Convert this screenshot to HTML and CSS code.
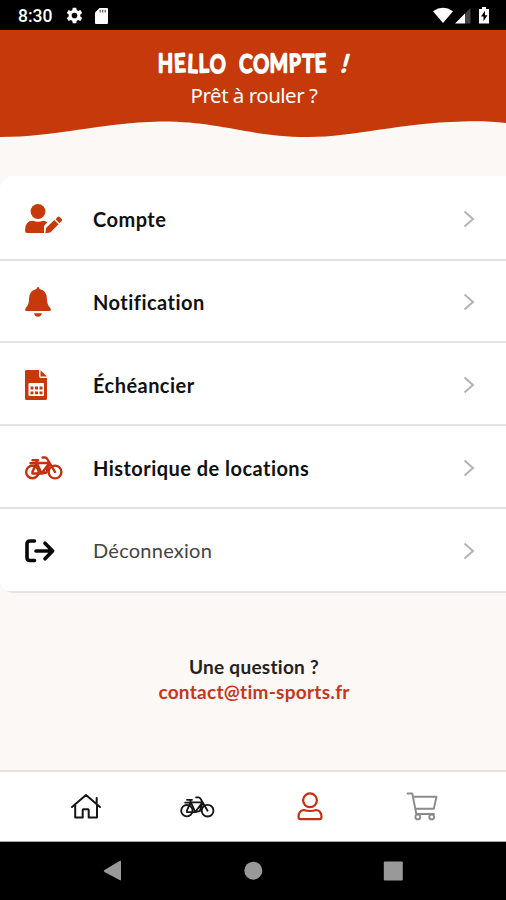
FILE: index.html
```html
<!DOCTYPE html>
<html lang="fr">
<head>
<meta charset="utf-8">
<title>Compte</title>
<link rel="stylesheet" href="styles.css">
</head>
<body>
<svg class="defs" width="0" height="0">
  <symbol id="bike" viewBox="0 0 38 24">
    <g fill="none" stroke="currentColor" stroke-linecap="round" stroke-linejoin="round">
      <circle cx="7.4" cy="16" r="6.200"/><circle cx="30" cy="16" r="6.4"/>
      <path d="M7.4 16 11.500 7H24.500L16.500 17.500H7.4M7.500 4.200H13M11 4.300l.8 3 4.700 10M30 16 22.300 3Q21.500 1.500 20 1.500H17.500M24.500 7.200 21.500 16.500 16.500 17.500M11.500 7.200H5.500"/>
    </g>
  </symbol>
  <symbol id="chevron" viewBox="0 0 12 18"><path d="m1.500 1.500 8.500 7.500-8.500 7.500" fill="none" stroke="currentColor" stroke-width="2"/></symbol>
</svg>
<div class="screen">
  <div class="status">
    <span class="time">8:30</span>
    <svg class="gear" viewBox="0 0 24 24"><path fill="currentColor" fill-rule="evenodd" d="M9.500 1h5l.6 3.400 1.900 1.100 3.300-1.200 2.500 4.300-2.700 2.200v2.400l2.700 2.200-2.500 4.300-3.300-1.200-1.900 1.100-.6 3.400h-5l-.6-3.400L7 18.500l-3.300 1.200-2.500-4.300 2.700-2.200v-2.400L1.200 8.600l2.500-4.300L7 5.500l1.900-1.100zM12 8a4 4 0 1 0 0 8 4 4 0 0 0 0-8z"/></svg>
    <svg class="card" viewBox="0 0 13 16"><path fill="currentColor" d="M4.500 0H12q1 0 1 1v14q0 1-1 1H1q-1 0-1-1V4.500z"/><path stroke="#555" stroke-width="1.200" d="M5.200 1.800v2.700M7.700 1.800v2.700M10.200 1.800v2.700"/></svg>
    <svg class="signals" viewBox="0 0 58 18">
      <path fill="#fff" d="M0 4.200Q10 -2.500 20 4.200L10 16z"/>
      <path fill="#444" d="M37.500 1v15.500H32V6.500z"/><path fill="#fff" d="M32 6.500v10H22z"/>
      <path fill="#fff" d="M46 2h3V0h4v2h3v14.500H46z"/><path fill="#000" d="m52 3.800-4 5.700h2.500v4.800l4-6H52z"/>
    </svg>
  </div>
  <header class="header">
    <h1 class="title">
      <svg class="lettering" viewBox="0 0 506 32">
        <g transform="translate(158 25) scale(.8 1)"><text textLength="84" rotate="0 -3 3 -1 4">HELLO</text></g>
        <g transform="translate(239 25) scale(.8 1)"><text textLength="109" rotate="2 3 0 -2 1 -2">COMPTE</text></g>
        <g class="bang" transform="translate(340 25) skewX(-15)"><text>!</text></g>
      </svg>
    </h1>
    <p class="subtitle">Prêt à rouler ?</p>
  </header>
  <svg class="wave" viewBox="0 0 506 18"><path fill="#c5390b" d="M0 0H506V2C492 .3 478 0 462 .5C400 2 350 16.500 307 16C250 16 220 0 160 .5C100 2 55 16 0 16z"/></svg>
  <nav class="menu">
    <a class="row"><svg class="icon" viewBox="0 0 38 32" fill="#c5390b"><circle cx="13" cy="8.500" r="7.400"/><path d="M0 27.500Q0 17.800 8 17.800q5 2 10 0 3 0 4.400 1.500L19 23v7H2.300Q0 30 0 27.500z"/><path d="m21 25 8.300-8 4.200 4.200L25.300 29.500l-4.900.7zM30.500 16.300l2.200-2.200q1-1 2 0l2 2q1 1 0 2l-2.200 2.200z"/></svg><span class="label">Compte</span><svg class="chevron"><use href="#chevron"/></svg></a>
    <a class="row"><svg class="icon" viewBox="0 0 38 32" fill="#c5390b"><path d="M11.500 3q0-2 1.500-2t1.500 2q7.500 1.500 7.500 10 0 6 3.300 9 1.500 3-1 3H1.700q-2.500 0-1-3Q4 19 4 13q0-8.500 7.500-10zM9 27.300h8q-1 3.500-4 3.500t-4-3.500z"/></svg><span class="label">Notification</span><svg class="chevron"><use href="#chevron"/></svg></a>
    <a class="row"><svg class="icon" viewBox="0 0 38 32" fill="#c5390b"><path d="M1.500 1H14v6q0 2 2 2h6v20.500q0 1.500-1.500 1.500h-19Q0 31 0 29.500v-27Q0 1 1.500 1zM15.500 1.200 22 7.500h-6.500z"/><rect x="3.500" y="14" width="15.500" height="13" rx="1" fill="#fff"/><path d="M5.500 17.500h3v3h-3zm4.500 0h3v3h-3zm4.500 0h3v3h-3zm-9 5h3v2.700h-3zm4.500 0h3v2.700h-3zm4.500 0h3v2.700h-3z"/></svg><span class="label">Échéancier</span><svg class="chevron"><use href="#chevron"/></svg></a>
    <a class="row"><svg class="icon bike-red"><use href="#bike"/></svg><span class="label">Historique de locations</span><svg class="chevron"><use href="#chevron"/></svg></a>
    <a class="row logout"><svg class="icon" viewBox="0 0 38 32" fill="none" stroke="#080808" stroke-width="3.600" stroke-linecap="round" stroke-linejoin="round"><path d="M9.500 6H5Q2 6 2 9v13.500q0 3 3 3h4.500M11 16h16M20 8.200l7.600 7.800-7.600 7.800"/></svg><span class="label">Déconnexion</span><svg class="chevron"><use href="#chevron"/></svg></a>
  </nav>
  <section class="contact">
    <p class="question">Une question ?</p>
    <a class="mail">contact@tim-sports.fr</a>
  </section>
  <nav class="tabs">
    <svg class="tab" viewBox="0 0 38 32" fill="none" stroke="#151515" stroke-width="2" stroke-linejoin="round" stroke-linecap="round"><path d="m5 17 14-12 14 12M8.200 15v12.500h7.500V20q0-.7.700-.7h4.600q.7 0 .7.700v7.500H30V15M29.700 8v5"/></svg>
    <svg class="tab tab-bike"><use href="#bike"/></svg>
    <svg class="tab person" viewBox="0 0 38 32" fill="none" stroke="#c5300f" stroke-width="2.200"><circle cx="19" cy="10.300" r="6.900"/><path d="M12.800 20q6.200 2 12.400 0 5.300.7 5.300 7 0 2.200-2.200 2.200H9.700q-2.200 0-2.200-2.200 0-6.300 5.300-7z"/></svg>
    <svg class="tab" viewBox="0 0 38 32" fill="none" stroke="#888b90" stroke-width="1.900" stroke-linejoin="round" stroke-linecap="round"><path d="M4.500 3.500h4.800l4 20.500H31M10 6.800h23.500l-2.700 12H12.400"/><circle cx="14.800" cy="27" r="2.400"/><circle cx="28.700" cy="27" r="2.400"/></svg>
  </nav>
  <div class="system">
    <svg class="sys" viewBox="0 0 20 22"><path fill="#999" d="M1.500 10 17 .8q1-.5 1 .5v18.400q0 1-1 .5L1.500 12q-1.500-1 0-2z"/></svg>
    <svg class="sys" viewBox="0 0 20 22"><circle cx="10.300" cy="10.700" r="9" fill="#999"/></svg>
    <svg class="sys" viewBox="0 0 20 22"><rect x=".8" y="1.500" width="19" height="19" rx="1" fill="#999"/></svg>
  </div>
</div>
</body>
</html>
```

FILE: styles.css
```css
* { box-sizing: border-box; margin: 0; padding: 0; }
body { background: #fcf8f5; font-family: Lato, sans-serif; font-variant-ligatures: none; }
.defs { display: block; height: 0; }
.screen { width: 506px; height: 900px; display: flex; flex-direction: column; overflow: hidden; }
.status { height: 30px; flex: none; background: #000; color: #fff; display: flex; align-items: center; padding: 1px 15px 0 18px; }
.time { font: 500 17.5px/28px Roboto, sans-serif; width: 34px; margin-right: 14px; white-space: nowrap; }
.gear { width: 17px; height: 17px; margin-right: 12px; }
.card { width: 13px; height: 16px; }
.signals { width: 58px; height: 18px; margin-left: auto; }
.header { height: 91px; flex: none; background: #c5390b; color: #fff; text-align: center; padding-top: 17px; }
.title { height: 32px; }
.lettering { display: block; width: 506px; height: 32px; fill: #fff; stroke: #fff; stroke-width: 2.4px; stroke-linejoin: round; font: 400 24.5px Lato, sans-serif; }
.bang { stroke-width: 1.6px; }
.subtitle { font: 400 20.500px/32px "Noto Sans", sans-serif; letter-spacing: -.5px; padding-left: 2px; }
.wave { display: block; width: 506px; height: 18px; flex: none; }
.menu { margin-top: 37px; flex: none; display: grid; grid-template-rows: 85px 82px 83px 83px 84px; background: #fff; border-radius: 14px 0 0 14px; overflow: hidden; }
.row { display: flex; align-items: center; padding: 2px 31px 0 25px; border-bottom: 2px solid #e3e3e3; }
.icon { width: 38px; height: 32px; margin-right: 30px; flex: none; }
.bike-red { height: 24px; color: #c5300f; stroke-width: 2.4; }
.label { flex: 1; font-size: 20px; line-height: 24px; font-weight: 700; color: #111; letter-spacing: .46px; }
.logout .label { margin-top: -2px; font-weight: 400; color: #444; letter-spacing: .25px; }
.chevron { width: 12px; height: 18px; color: #b3b3b3; }
.contact { flex: 1; padding-top: 61px; text-align: center; font-size: 19px; font-weight: 700; line-height: 25px; padding-left: 2px; letter-spacing: .28px; }
.question { color: #222; }
.mail { color: #c8351a; }
.tabs { height: 72px; flex: none; background: #fff; border-top: 2px solid #e2e2e2; border-bottom: 1px solid #aaa; display: flex; padding: 18px 65px 0 67px; justify-content: space-between; }
.tab { width: 38px; height: 32px; }
.tab-bike { width: 35px; height: 22px; margin-top: 6px; color: #151515; stroke-width: 2; }
.person { margin-right: -1px; }
.system { height: 58px; flex: none; background: #000; display: flex; justify-content: space-between; padding: 18px 103px 0; }
.sys { width: 20px; height: 22px; }
```
